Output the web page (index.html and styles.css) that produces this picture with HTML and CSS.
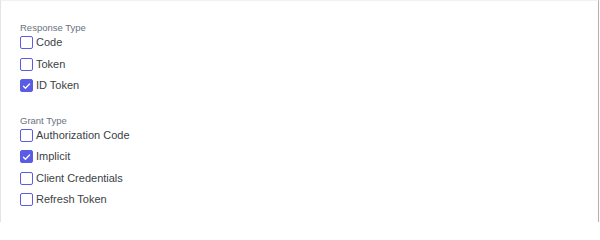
FILE: index.html
```html
<!DOCTYPE html>
<html>
<head>
<meta charset="utf-8">
<link rel="stylesheet" href="styles.css">
</head>
<body>
<div class="frame">
  <div class="panel">
    <fieldset class="group">
      <div class="legend">Response Type</div>
      <label class="opt"><span class="box"></span><span class="txt">Code</span></label>
      <label class="opt"><span class="box"></span><span class="txt">Token</span></label>
      <label class="opt"><span class="box on"><svg viewBox="0 0 16 16"><path d="M3.6 8.3l2.9 2.9 5.9-6.2" fill="none" stroke="#fff" stroke-width="1.9" stroke-linecap="round" stroke-linejoin="round"/></svg></span><span class="txt">ID Token</span></label>
    </fieldset>
    <fieldset class="group second">
      <div class="legend">Grant Type</div>
      <label class="opt"><span class="box"></span><span class="txt">Authorization Code</span></label>
      <label class="opt"><span class="box on"><svg viewBox="0 0 16 16"><path d="M3.6 8.3l2.9 2.9 5.9-6.2" fill="none" stroke="#fff" stroke-width="1.9" stroke-linecap="round" stroke-linejoin="round"/></svg></span><span class="txt">Implicit</span></label>
      <label class="opt"><span class="box"></span><span class="txt">Client Credentials</span></label>
      <label class="opt"><span class="box"></span><span class="txt">Refresh Token</span></label>
    </fieldset>
  </div>
</div>
</body>
</html>
```
FILE: styles.css
```css
html, body {
  margin: 0;
  padding: 0;
  background: #ffffff;
}
body {
  font-family: "Liberation Sans", Arial, sans-serif;
  color: #374151;
}
.frame {
  width: 599px;
  height: 222px;
  box-sizing: border-box;
  border-top: 1px solid #f1f1f4;
  border-left: 1px solid #e4e4e8;
  border-right: 1px solid #b9aab3;
}
.panel {
  padding: 21px 0 0 18px;
}
.group {
  border: 0;
  margin: 0;
  padding: 0;
  display: flex;
  flex-direction: column;
}
.second {
  margin-top: 18px;
}
.legend {
  font-size: 9.5px;
  color: #6b7280;
  line-height: 11px;
  margin-bottom: -1px;
  padding-left: 1px;
}
.opt {
  display: flex;
  align-items: center;
  height: 21.5px;
  gap: 3px;
}
.box {
  width: 11px;
  height: 11px;
  border: 1.5px solid #5b5ce6;
  border-radius: 2px;
  background: #fff;
  display: flex;
  align-items: center;
  justify-content: center;
  flex: none;
  margin-left: 1px;
}
.box.on {
  background: #5b5ce6;
}
.box svg {
  width: 12px;
  height: 12px;
}
.txt {
  font-size: 11px;
  color: #3b3f46;
  line-height: 13px;
}
```
